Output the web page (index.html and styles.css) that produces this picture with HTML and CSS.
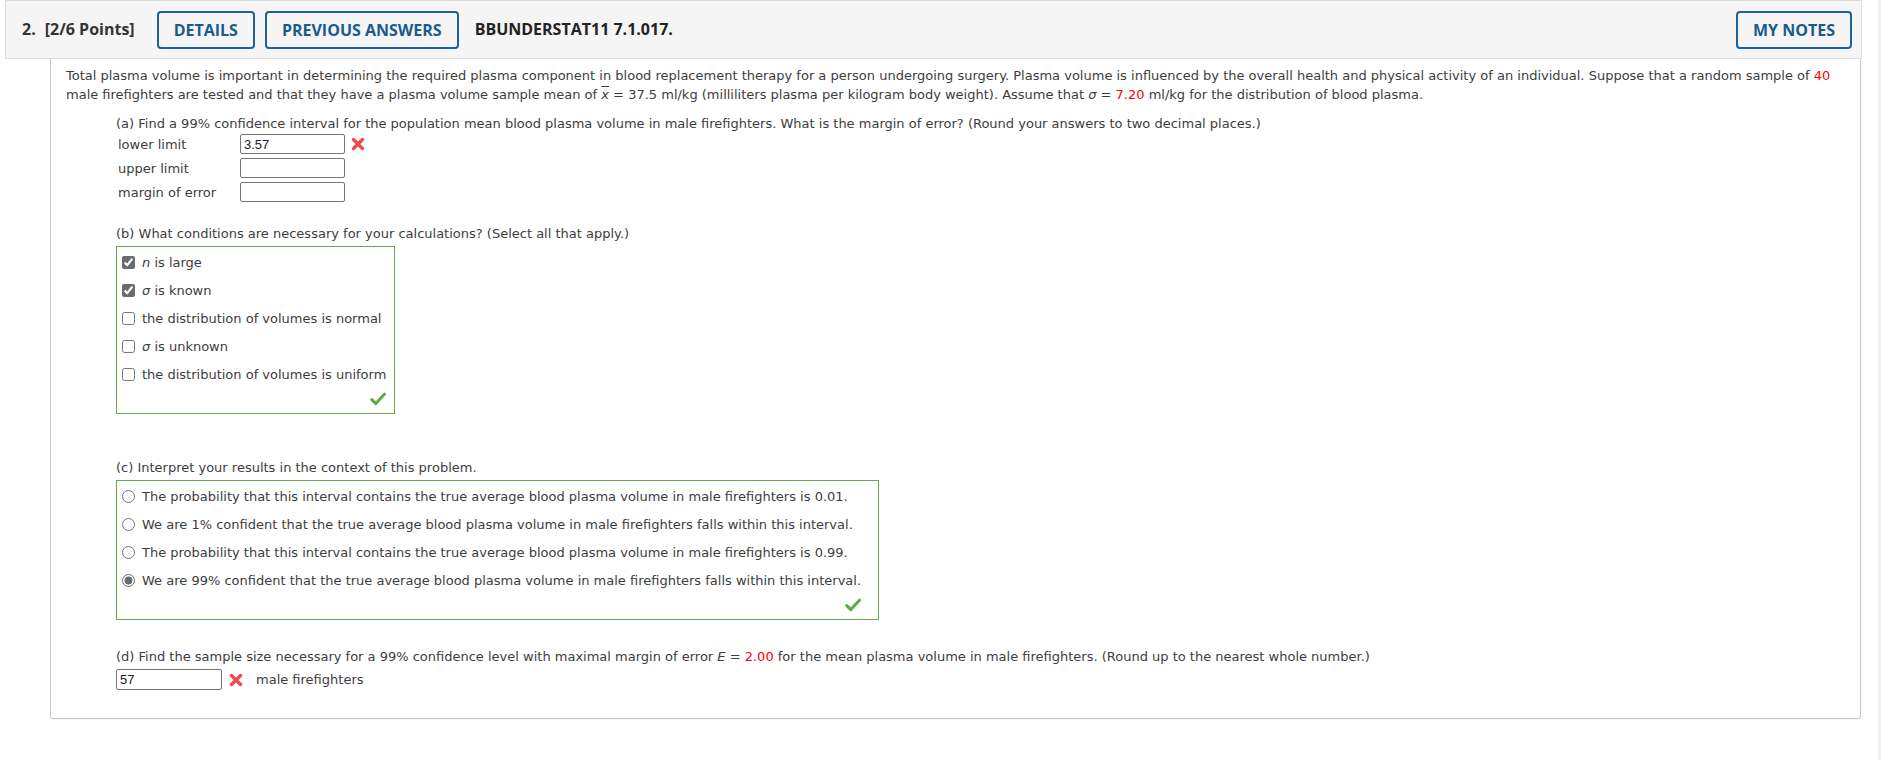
FILE: index.html
```html
<!DOCTYPE html>
<html lang="en">
<head>
    <meta charset="UTF-8">
    <meta name="viewport" content="width=device-width, initial-scale=1.0">
    <title>Question 2</title>
    <link rel="stylesheet" href="styles.css">
</head>
<body>

<div class="page">
    <div class="main">
        <div class="question-header">
            <span class="q-number">2.</span>
            <span class="q-points">[2/6 Points]</span>
            <button class="header-btn">DETAILS</button>
            <button class="header-btn">PREVIOUS ANSWERS</button>
            <span class="q-code">BBUNDERSTAT11 7.1.017.</span>
            <button class="header-btn notes-btn">MY NOTES</button>
        </div>

        <div class="question-body">
            <p class="intro">Total plasma volume is important in determining the required plasma component in blood replacement therapy for a person undergoing surgery. Plasma volume is influenced by the overall health and physical activity of an individual. Suppose that a random sample of <span class="given">40</span> male firefighters are tested and that they have a plasma volume sample mean of <span class="xbar">x</span> = 37.5 ml/kg (milliliters plasma per kilogram body weight). Assume that <i>&sigma;</i> = <span class="given">7.20</span> ml/kg for the distribution of blood plasma.</p>

            <div class="parts">
                <!-- (a) -->
                <div class="part part-a">
                    <p class="part-title">(a) Find a 99% confidence interval for the population mean blood plasma volume in male firefighters. What is the margin of error? (Round your answers to two decimal places.)</p>
                    <div class="field-row">
                        <label for="lower">lower limit</label>
                        <input type="text" id="lower" class="answer" value="3.57">
                        <svg class="mark-wrong" width="14" height="14" viewBox="0 0 14 14"><path d="M2.5 2.5L11.5 11.5M11.5 2.5L2.5 11.5" stroke="#ee4a52" stroke-width="3.4" stroke-linecap="round"/></svg>
                    </div>
                    <div class="field-row">
                        <label for="upper">upper limit</label>
                        <input type="text" id="upper" class="answer">
                    </div>
                    <div class="field-row">
                        <label for="margin">margin of error</label>
                        <input type="text" id="margin" class="answer">
                    </div>
                </div>

                <!-- (b) -->
                <div class="part part-b">
                    <p class="part-title">(b) What conditions are necessary for your calculations? (Select all that apply.)</p>
                    <div class="choice-box">
                        <label class="choice"><input type="checkbox" checked><span><i>n</i> is large</span></label>
                        <label class="choice"><input type="checkbox" checked><span><i>&sigma;</i> is known</span></label>
                        <label class="choice"><input type="checkbox"><span>the distribution of volumes is normal</span></label>
                        <label class="choice"><input type="checkbox"><span><i>&sigma;</i> is unknown</span></label>
                        <label class="choice"><input type="checkbox"><span>the distribution of volumes is uniform</span></label>
                        <div class="feedback">
                            <svg width="16" height="14" viewBox="0 0 16 14"><path d="M1.8 7.6L5.8 11.6L14.4 2.2" fill="none" stroke="#5aad45" stroke-width="3" stroke-linecap="round" stroke-linejoin="round"/></svg>
                        </div>
                    </div>
                </div>

                <!-- (c) -->
                <div class="part part-c">
                    <p class="part-title">(c) Interpret your results in the context of this problem.</p>
                    <div class="choice-box">
                        <label class="choice"><input type="radio" name="interpret"><span>The probability that this interval contains the true average blood plasma volume in male firefighters is 0.01.</span></label>
                        <label class="choice"><input type="radio" name="interpret"><span>We are 1% confident that the true average blood plasma volume in male firefighters falls within this interval.</span></label>
                        <label class="choice"><input type="radio" name="interpret"><span>The probability that this interval contains the true average blood plasma volume in male firefighters is 0.99.</span></label>
                        <label class="choice"><input type="radio" name="interpret" checked><span>We are 99% confident that the true average blood plasma volume in male firefighters falls within this interval.</span></label>
                        <div class="feedback">
                            <svg width="16" height="14" viewBox="0 0 16 14"><path d="M1.8 7.6L5.8 11.6L14.4 2.2" fill="none" stroke="#5aad45" stroke-width="3" stroke-linecap="round" stroke-linejoin="round"/></svg>
                        </div>
                    </div>
                </div>

                <!-- (d) -->
                <div class="part part-d">
                    <p class="part-title">(d) Find the sample size necessary for a 99% confidence level with maximal margin of error <i>E</i> = <span class="given">2.00</span> for the mean plasma volume in male firefighters. (Round up to the nearest whole number.)</p>
                    <div class="field-row">
                        <input type="text" class="answer" value="57">
                        <svg class="mark-wrong" width="14" height="14" viewBox="0 0 14 14"><path d="M2.5 2.5L11.5 11.5M11.5 2.5L2.5 11.5" stroke="#ee4a52" stroke-width="3.4" stroke-linecap="round"/></svg>
                        <span class="unit">male firefighters</span>
                    </div>
                </div>
            </div>
        </div>
    </div>
    <div class="scroll-track"></div>
</div>

</body>
</html>
```

FILE: styles.css
```css
* {
    box-sizing: border-box;
}
body {
    font-family: 'DejaVu Sans', Verdana, sans-serif;
    font-size: 13px;
    line-height: 19px;
    color: #3d3d3d;
    background-color: #ffffff;
    margin: 0;
}
p {
    margin: 0;
}
.page {
    display: flex;
    height: 100vh;
}
.main {
    flex: 1;
}
.scroll-track {
    width: 3px;
    background-color: #f0f0f0;
}

/* header bar */
.question-header {
    display: flex;
    align-items: center;
    height: 59px;
    margin: 0 16px 0 5px;
    padding: 0 9px 0 16px;
    background-color: #f5f5f5;
    border: 1px solid #dddddd;
    font-family: 'Open Sans', sans-serif;
    font-size: 16px;
    font-weight: 700;
    color: #333333;
}
.q-number {
    margin-right: 9px;
}
.q-points {
    margin-right: 22px;
}
.header-btn {
    height: 38px;
    padding: 0 15px;
    margin-right: 10px;
    background: transparent;
    border: 2px solid #1d6196;
    border-radius: 4px;
    color: #1a5b8e;
    font-family: 'Open Sans', sans-serif;
    font-size: 16px;
    font-weight: 700;
    cursor: pointer;
}
.q-code {
    margin-left: 6px;
    color: #222222;
}
.notes-btn {
    margin-left: auto;
    margin-right: 0;
}

/* question body */
.question-body {
    margin: 0 17px 0 50px;
    padding: 7px 15px 24px 15px;
    border: 1px solid #cccccc;
    border-top: none;
    border-radius: 0 0 3px 3px;
    box-shadow: 0 1px 1px rgba(0, 0, 0, 0.05);
}
.given {
    color: #ff0000;
}
.xbar {
    font-style: italic;
    text-decoration: overline;
}
.parts {
    margin-left: 50px;
}
.part-a {
    margin-top: 10px;
}
.part-b {
    margin-top: 22px;
}
.part-c {
    margin-top: 44px;
}
.part-d {
    margin-top: 27px;
}
.part-title {
    margin-bottom: 3px;
}
.part-a .part-title {
    margin-bottom: 1px;
}

/* answer fields */
.field-row {
    display: flex;
    align-items: center;
    height: 20px;
    margin-bottom: 4px;
}
.field-row label {
    width: 124px;
    padding-left: 2px;
}
.answer {
    width: 105px;
    height: 20px;
    padding: 0 3px;
    border: 1px solid #767676;
    border-radius: 2px;
    font-family: 'Liberation Sans', Arial, sans-serif;
    font-size: 13px;
    color: #222222;
}
.mark-wrong {
    margin-left: 6px;
}
.part-d .field-row {
    height: 21px;
}
.part-d .answer {
    width: 106px;
    height: 21px;
}
.part-d .mark-wrong {
    margin-left: 7px;
}
.unit {
    margin-left: 13px;
}

/* choice boxes */
.choice-box {
    width: fit-content;
    padding: 1px 8px 3px 5px;
    border: 1px solid #6aa84f;
}
.part-c .choice-box {
    padding-right: 17px;
}
.choice {
    display: flex;
    align-items: center;
    gap: 7px;
    height: 28px;
}
.choice input {
    width: 13px;
    height: 13px;
    margin: 0;
    accent-color: #6b6b6b;
}
.feedback {
    display: flex;
    justify-content: flex-end;
    align-items: center;
    height: 22px;
}
```
